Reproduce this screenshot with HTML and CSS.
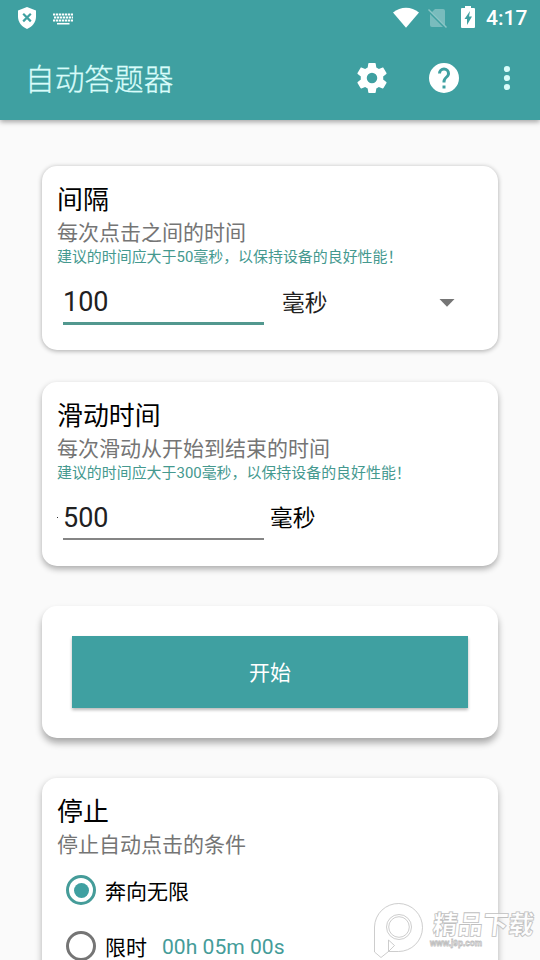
FILE: index.html
```html
<!DOCTYPE html>
<html lang="zh-CN">
<head>
<meta charset="utf-8">
<title>自动答题器</title>
<link rel="stylesheet" href="styles.css">
</head>
<body>
<div class="screen">
  <header class="header">
    <div class="status">
      <svg class="shield" width="20" height="24" viewBox="0 0 20 24"><path fill="#fff" d="M10 1 19 4.500V11c0 5-4 10-9 12C5 21 1 16 1 11V4.500z"/><path stroke="#3fa0a1" stroke-width="2.200" d="m6.200 7.800 7.600 7.600m0-7.600-7.600 7.600"/></svg>
      <svg class="keyboard" width="20" height="12" viewBox="0 0 20 12"><g stroke="#fff" stroke-width="2" fill="none"><path stroke-dasharray="2.300 .7" d="M0 1.500h20M0 7.500h20"/><path stroke-dasharray="2.300 .7" d="M1 4.500h19"/><path stroke-width="1.600" d="M4 10.700h12.500"/></g></svg>
      <svg class="wifi" width="26" height="21" viewBox="0 0 26 21"><path fill="#fff" d="M0 5.500C7.500-1 18.500-1 26 5.500L13 20.800z"/></svg>
      <svg class="sim" width="20" height="21" viewBox="0 0 20 21"><path fill="#fff" opacity=".3" d="M7 1h8q2 0 2 2v14L4 4zM2 6l13 13H4q-2 0-2-2z"/><path stroke="#fff" opacity=".4" stroke-width="1.500" d="m.5 1.500 18 18"/></svg>
      <svg class="battery" width="14" height="22" viewBox="0 0 14 22"><path fill="#fff" d="M4 0h6v2h3q1 0 1 1v18q0 1-1 1H1q-1 0-1-1V3q0-1 1-1h3z"/><path fill="#3fa0a1" d="M9 5 3.500 13H6v6l5-8.500H8z"/></svg>
      <span class="clock">4:17</span>
    </div>
    <div class="toolbar">
      <h1 class="app-title">自动答题器</h1>
      <svg class="gear" width="36" height="36" viewBox="0 0 24 24"><path fill="#fff" d="M19.430 12.980c.04-.32.070-.64.070-.98s-.03-.66-.07-.98l2.110-1.650c.19-.15.240-.42.120-.64l-2-3.460c-.12-.22-.39-.3-.61-.22l-2.490 1c-.52-.4-1.080-.73-1.690-.98l-.38-2.650C14.460 2.180 14.250 2 14 2h-4c-.25 0-.46.180-.49.420l-.38 2.650c-.61.250-1.170.590-1.690.980l-2.490-1c-.23-.09-.49 0-.61.220l-2 3.460c-.13.220-.07.490.120.640l2.110 1.650c-.04.320-.07.650-.07.980s.03.660.070.980l-2.110 1.650c-.19.150-.24.420-.12.640l2 3.460c.12.220.390.300.610.220l2.490-1c.52.400 1.080.730 1.690.980l.38 2.650c.03.240.240.420.490.420h4c.25 0 .46-.18.490-.42l.38-2.650c.61-.25 1.170-.59 1.690-.98l2.490 1c.23.090.490 0 .61-.22l2-3.460c.12-.22.070-.49-.12-.64zM12 15.500a3.500 3.500 0 1 1 0-7 3.500 3.500 0 0 1 0 7z"/></svg>
      <svg class="help" width="36" height="36" viewBox="0 0 24 24"><path fill="#fff" d="M12 2a10 10 0 1 0 0 20 10 10 0 0 0 0-20zm1 17h-2v-2h2zm2.070-7.750-.9.920C13.450 12.900 13 13.500 13 15h-2v-.5c0-1.100.45-2.100 1.170-2.830l1.240-1.260c.37-.36.590-.86.590-1.410a2 2 0 0 0-4 0H8a4 4 0 0 1 8 0c0 .88-.36 1.680-.93 2.250z"/></svg>
      <svg class="more" width="8" height="26" viewBox="0 0 8 26"><g fill="#d9fcfa"><circle cx="4" cy="4" r="3.100"/><circle cx="4" cy="13" r="3.100"/><circle cx="4" cy="22" r="3.100"/></g></svg>
    </div>
  </header>

  <main class="content">
    <section class="card card-interval">
      <h2 class="heading">间隔</h2>
      <p class="sub">每次点击之间的时间</p>
      <p class="hint">建议的时间应大于50毫秒，以保持设备的良好性能！</p>
      <div class="row">
        <div class="field focused">100</div>
        <div class="select"><span class="value">毫秒</span><svg width="16" height="8" viewBox="0 0 16 8"><path fill="#757575" d="M.5 0h15L8 7.700z"/></svg></div>
      </div>
    </section>

    <section class="card card-swipe">
      <h2 class="heading">滑动时间</h2>
      <p class="sub">每次滑动从开始到结束的时间</p>
      <p class="hint">建议的时间应大于300毫秒，以保持设备的良好性能！</p>
      <div class="row">
        <i class="speck"></i>
        <div class="field">500</div>
        <span class="unit">毫秒</span>
      </div>
    </section>

    <section class="card card-start"><div class="button">开始</div></section>

    <section class="card card-stop">
      <h2 class="heading">停止</h2>
      <p class="sub">停止自动点击的条件</p>
      <div class="options">
        <div class="option"><i class="radio checked"></i><span>奔向无限</span></div>
        <div class="option"><i class="radio"></i><span>限时</span><span class="duration">00h 05m 00s</span></div>
      </div>
    </section>
  </main>

  <svg class="watermark" width="180" height="70" viewBox="0 0 180 70">
    <g fill="#fff" fill-opacity=".8" stroke="#c0c0c0" stroke-width=".8">
      <path d="M14.500 62V37a24 24 0 1 1 24 24.500H28.500l6-6-6-5.500V61.500l-7.500 6z"/>
      <circle cx="39" cy="37" r="12.500"/><circle cx="39" cy="37" r="10.300"/>
      <g transform="translate(72 45) skewX(-6)" class="brand"><text x="0" y="-1" textLength="50" lengthAdjust="spacingAndGlyphs">精品</text><text x="50" y="-1" textLength="51" lengthAdjust="spacingAndGlyphs">下载</text></g>
      <text class="site" x="70" y="56" textLength="52" lengthAdjust="spacingAndGlyphs">www.j9p.com</text>
    </g>
  </svg>
</div>
</body>
</html>
```
FILE: styles.css
```css
* { box-sizing: border-box; }
body {
  margin: 0;
  background: #fafafa;
  font-family: Roboto, "Noto Sans CJK SC", sans-serif;
  color: #000;
}
.screen {
  position: relative;
  width: 540px;
  height: 960px;
  overflow: hidden;
}
svg { display: block; flex: none; }
h1, h2, p { margin: 0; font-weight: 400; }

.header {
  height: 120px;
  background: #3fa0a1;
  box-shadow: 0 2px 5px rgba(0, 0, 0, .35);
}
.status {
  display: flex;
  align-items: center;
  height: 36px;
  padding: 0 12px 0 17px;
}
.keyboard { margin-left: 16px; margin-top: 1px; }
.wifi { margin-left: auto; margin-top: -2px; }
.sim { margin-left: 9px; }
.battery { margin-left: 13px; margin-top: -2px; }
.clock {
  width: 42px;
  margin-left: 11px;
  padding-top: 1px;
  font-size: 21px;
  font-weight: 500;
  line-height: 35px;
  color: #fff;
  white-space: nowrap;
}
.toolbar {
  display: flex;
  align-items: center;
  height: 84px;
  padding: 0 29px 0 25px;
}
.app-title {
  flex: 1;
  padding-top: 3px;
  font-size: 29.700px;
  font-weight: 300;
  line-height: 81px;
  color: #d9fcfa;
  -webkit-text-stroke: .3px #d9fcfa;
}
.gear { margin-right: 36px; }
.help { margin-right: 41px; }

.content { padding: 46px 42px 0; }
.card {
  padding: 16px 15px 0;
  border-radius: 15px;
  background: #fff;
}
.card-interval { height: 184px; box-shadow: 0 1px 5px rgba(0, 0, 0, .33); }
.card-swipe { height: 184px; margin-top: 32px; box-shadow: 0 3px 6px rgba(0, 0, 0, .32); }
.card-start { height: 132px; margin-top: 40px; padding: 30px; box-shadow: 0 5px 7px rgba(0, 0, 0, .33); }
.card-stop { height: 220px; margin-top: 40px; box-shadow: 0 3px 7px rgba(0, 0, 0, .3); }

.heading { height: 36px; font-size: 25.900px; line-height: 37px; }
.sub { font-size: 21px; line-height: 30px; color: #757575; }
.hint { font-size: 14.950px; line-height: 18px; color: #45998f; white-space: nowrap; }
.row { display: flex; align-items: flex-start; padding-left: 6px; margin-top: 14px; }
.field {
  width: 201px;
  height: 45px;
  border-bottom: 3px solid #52988f;
  font-size: 27px;
  line-height: 44px;
  color: #212121;
}
.field:not(.focused) { height: 44px; border-bottom: 2px solid #858585; }
.select {
  display: flex;
  flex: 1;
  align-items: center;
  justify-content: space-between;
  height: 45px;
  padding: 0 28px 0 18px;
  font-size: 22.700px;
  color: #212121;
}
.value { padding-bottom: 3px; }
.unit { margin-left: 6px; font-size: 22.700px; line-height: 46px; }
.speck { width: 1px; height: 1px; margin: 21px 5px 0 -6px; background: #333; }

.button {
  height: 72px;
  background: #3fa0a1;
  box-shadow: 0 2px 3px rgba(0, 0, 0, .28);
  font-size: 21px;
  line-height: 74px;
  text-align: center;
  color: #fff;
}
.options { padding-top: 2px; }
.option {
  display: flex;
  align-items: center;
  height: 56px;
  padding-left: 9px;
  font-size: 21px;
}
.radio {
  display: grid;
  place-items: center;
  width: 30px;
  height: 30px;
  margin-right: 9px;
  border: 3px solid #757575;
  border-radius: 50%;
}
.radio.checked { border-color: #459c99; }
.radio.checked::after {
  width: 15px;
  height: 15px;
  border-radius: 50%;
  background: #3fa0a1;
  content: "";
}
.duration { margin-left: 15px; font-size: 21.100px; color: #459c99; }

.watermark { position: absolute; left: 360px; top: 890px; }
.brand { font: 900 26px "Noto Sans CJK SC", sans-serif; }
.site { font: 700 9px "Liberation Sans", sans-serif; }
```
